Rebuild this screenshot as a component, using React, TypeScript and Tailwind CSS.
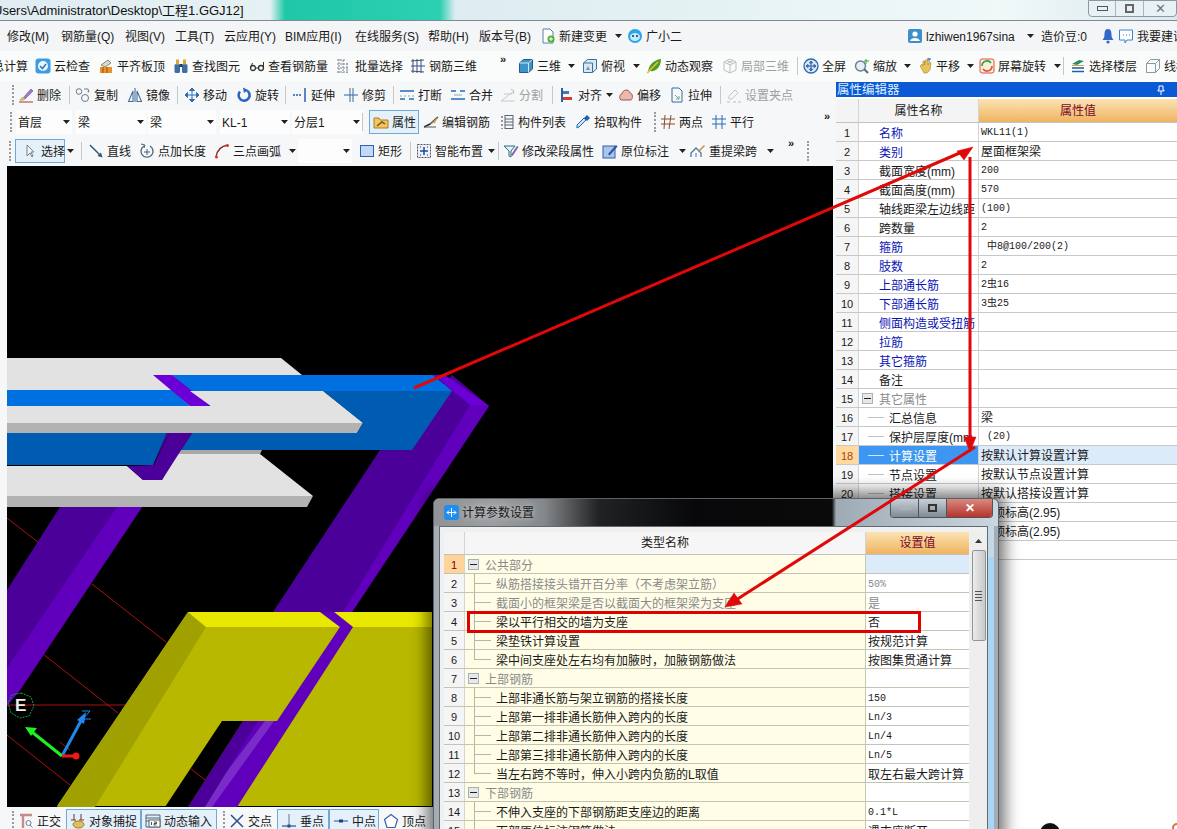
import React from "react";

const S = (p: { children: React.ReactNode }) => (
  <svg viewBox="0 0 16 16" className="w-4 h-4 flex-none" fill="none">{p.children}</svg>
);
const icons: Record<string, React.ReactNode> = {
  doc: <><path d="M3 1h7l3 3v11H3z" fill="#fff" stroke="#5a7fa8" /><circle cx="11" cy="11" r="3.5" fill="#4caf2e" /><path d="M9 11h4M11 9v4" stroke="#fff" /></>,
  bot: <><circle cx="8" cy="8" r="7" fill="#2aa5e8" /><ellipse cx="8" cy="9" rx="5" ry="4" fill="#bfeaff" /><circle cx="6" cy="8" r="1" fill="#135" /><circle cx="10" cy="8" r="1" fill="#135" /></>,
  user: <><rect x="1" y="1" width="14" height="14" rx="2" fill="#3d8fc9" /><circle cx="8" cy="6" r="2.6" fill="#fff" /><path d="M3 13c1-4 9-4 10 0z" fill="#fff" /></>,
  bell: <><path d="M8 1c3 0 3.5 3 3.5 6s1.5 4 2 5H2.500c.5-1 2-2 2-5S5 1 8 1z" fill="#3467c9" /><circle cx="8" cy="14" r="1.600" fill="#3467c9" /></>,
  chat: <><path d="M1.500 2h13v10H9l-2 3v-3H1.500z" fill="#fff" stroke="#3b82d6" /><path d="M5 7h1M8 7h1M11 7h1" stroke="#3b82d6" /></>,
  cloud: <><rect x="0.500" y="0.500" width="15" height="15" rx="3" fill="#3e9be0" /><circle cx="8" cy="8" r="5" fill="#e9f5ff" /><path d="M5 8l2.500 2.500L11 6" stroke="#2877c4" strokeWidth="1.500" /></>,
  level: <><path d="M3 7l7-5 3 3-6 4z" fill="#d9d9c8" stroke="#888" /><rect x="2" y="9" width="12" height="6" fill="#e8932a" /><path d="M5 9v6M9 9v6" stroke="#a34c10" /></>,
  bino: <><rect x="1.500" y="6" width="5.500" height="9" rx="1.500" fill="#3e6ea8" /><rect x="9" y="6" width="5.500" height="9" rx="1.500" fill="#3e6ea8" /><rect x="3" y="1.500" width="3" height="5" fill="#d9a63a" /><rect x="10" y="1.500" width="3" height="5" fill="#d9a63a" /><rect x="6.500" y="6" width="3" height="3" fill="#1f3f6a" /></>,
  glass: <><circle cx="4" cy="10" r="2.500" stroke="#333" strokeWidth="1.300" /><circle cx="12" cy="10" r="2.500" stroke="#333" strokeWidth="1.300" /><path d="M6.500 10h3M1.500 10l2-5M14.500 10V4" stroke="#333" /></>,
  batch: <path d="M1 2h9M1 6h12M1 10h12M1 14h12M3 1v14M7 2v13M11 5v10" stroke="#7b8794" strokeDasharray="2 1" />,
  rebar: <path d="M1 3l13-1M1 8h14M1 13l13 1M3 1v14M7 1v14M11 1v14" stroke="#3a4f7a" />,
  cube: <><path d="M1.500 5l4-3.500h9v9.500l-4 3.500h-9z" fill="#3f93c7" stroke="#235c85" /><path d="M1.500 5h9v9.500M10.500 5l4-3.500" stroke="#cfeaf8" /></>,
  top: <><path d="M1.500 5l4-3.500h9v9.500l-4 3.500h-9z" fill="#d9e8f2" stroke="#3c7198" /><path d="M1.500 5h9v9.500" stroke="#3c7198" /><path d="M4 12l2-4 2 4z" fill="#6a9ac0" /></>,
  orbit: <><path d="M2 15c0-7 5-13 13-14 0 8-5 13-11 12z" fill="#4f9e22" /><path d="M1 15L12 4" stroke="#f2c230" strokeWidth="1.500" /></>,
  local: <path d="M8 1l6 3v8l-6 3-6-3V4zM2 4l6 3 6-3M8 7v8M5 2.500l6 3M11 2.500l-6 3" stroke="#bdbdbd" />,
  full: <><circle cx="8" cy="8" r="7" fill="#d8e8f6" stroke="#2a6ab5" strokeWidth="1.300" /><path d="M8 3.500v9M3.500 8h9M8 3l-1.500 2h3zM8 13l-1.500-2h3zM3 8l2-1.500v3zM13 8l-2-1.500v3z" stroke="#2a5aa0" /></>,
  zoom: <><circle cx="6.500" cy="8" r="5" fill="#e7eef4" stroke="#6a7f90" strokeWidth="1.400" /><path d="M10 11l4 4" stroke="#5c6a75" strokeWidth="2" /><path d="M12 1v5M10 3h5" stroke="#3da028" /></>,
  hand: <><path d="M3 8l2-2 1 2V3h1.500v4l1-5H11v5l1.500-3.500L14 5l-1 7-3 3H7z" fill="#e7c25a" stroke="#a8842b" strokeWidth="0.600" /><path d="M10 1h4M12 0v3" stroke="#2a6ab5" /></>,
  rot: <><rect x="1" y="1" width="14" height="14" rx="2" fill="#f6f0d8" stroke="#e0503c" /><path d="M3 8a5 5 0 0 1 9-3" stroke="#29a044" strokeWidth="1.600" /><path d="M13 8a5 5 0 0 1-9 3" stroke="#e0503c" strokeWidth="1.600" /></>,
  floor: <><path d="M2 6l7-4 5 1-7 4z" fill="#2b8c60" /><path d="M2 10h12M2 13.500h12" stroke="#1d5fa8" strokeWidth="1.600" /><path d="M2 7.500h12" stroke="#d8a63a" /></>,
  wire: <path d="M1.500 5.500l4-4h9v9l-4 4h-9zM1.500 5.500h9v9M10.500 5.500l4-4" stroke="#8a9aa5" />,
  del: <><path d="M5 11L13 2l2 2-8 8z" fill="#9a7cc8" stroke="#6b4d9a" strokeWidth="0.600" /><path d="M2 13c1-2 3-3 4-2s0 3-4 2z" fill="#e6d07a" stroke="#a58a35" strokeWidth="0.600" /><path d="M1 15h14" stroke="#a33" /></>,
  copy: <><circle cx="4" cy="4.500" r="2.800" stroke="#6d7a85" /><circle cx="10" cy="11" r="3.500" stroke="#6d7a85" /><path d="M9 2h4l1 3M14 5l-1.500-.5" stroke="#6d7a85" /></>,
  mirror: <path d="M8 1v14M6 4L1.500 14.500H6zM10 4l4.500 10.500H10z" stroke="#46709b" strokeWidth="1.100" />,
  move: <path d="M8 1v14M1 8h14M8 1L5.500 3.500h5zM8 15l-2.500-2.500h5zM1 8l2.500-2.500v5zM15 8l-2.500-2.500v5z" fill="#2c6db3" stroke="#2c6db3" />,
  rotate: <><path d="M4 4.500A5.500 5.500 0 1 0 11 3.500" stroke="#2a66c0" strokeWidth="2.600" /><path d="M7 .5l5 2.500-4 3z" fill="#2a66c0" /></>,
  extend: <><path d="M1 8h9" stroke="#2a5fb0" strokeWidth="1.500" strokeDasharray="2 1" /><path d="M13 1v14" stroke="#2a5fb0" strokeWidth="1.500" /></>,
  trim: <><path d="M1 8h14" stroke="#2a5fb0" /><path d="M7 1v14M10 1v14" stroke="#3c6a90" /></>,
  brk: <><path d="M1 4h14M1 12h5M10 12h5" stroke="#2a6ab5" strokeWidth="1.500" /><path d="M1 9h14" stroke="#8ab" strokeDasharray="2 2" /></>,
  join: <><path d="M1 12h14M1 4h5M10 4h5" stroke="#2a6ab5" strokeWidth="1.500" /><path d="M4 8h8" stroke="#8ab" /></>,
  split: <><path d="M1 14h14M1 14L14 4M4 7h8" stroke="#c9c9c9" /><path d="M11 2l3 2-1 3" stroke="#bdbdbd" /></>,
  align: <><path d="M3 1v14" stroke="#2b5f9e" strokeWidth="2" /><path d="M4 4h6v3H4z" fill="#4a78b0" /><path d="M4 10h9v3H4z" fill="#d13e32" /></>,
  offset: <path d="M2 12c-1-4 1-5 2-5 0-4 7-6 8-1 3 0 3 6 1 7H3z" fill="#f0b8ac" stroke="#8a5f60" />,
  stretch: <><path d="M3 1h7l3 3v11H3z" stroke="#356a9e" /><path d="M6 8l4 4M10 9v3H7" stroke="#6a8" /></>,
  grip: <><path d="M9 3l3 3-6 6H3v-3z" stroke="#c6c6c6" /><path d="M1 15h3M7 15h3M12 15h3" stroke="#bdbdbd" /></>,
  attr: <><path d="M1 4h5l1 2h8v8H1z" fill="#f3c464" stroke="#ae7c1f" /><path d="M4 12l5-4 3 2" stroke="#7a5310" strokeWidth="1.500" /></>,
  editbar: <><path d="M1 13l6-3 8-7" stroke="#333" strokeWidth="1.500" /><path d="M7 10l8-7-3 6z" fill="#c9a24c" /><path d="M1 13h12" stroke="#555" /></>,
  list: <><path d="M3 2v2M3 6v2M3 10v2M3 14v1" stroke="#666" strokeWidth="1.300" /><rect x="6" y="1.500" width="8" height="13" stroke="#5b6770" /><path d="M6 5h8M6 8h8M6 11h8" stroke="#5b6770" /></>,
  pick: <><path d="M2 14l2-1 7-7-2-2-7 7z" fill="#cfe4f6" stroke="#1c63b0" /><path d="M9 4l3-3 3 3-3 3z" fill="#1c63b0" /></>,
  two: <path d="M1 5h14M1 10h14M5 1l-1 14M11 1L9 15" stroke="#8a4e2f" strokeWidth="1" />,
  para: <path d="M1 5h14M1 10h14M5 1v14M11 1v14" stroke="#2a6ab5" />,
  pointer: <path d="M5 2v11l3-3 2 4 1-1-2-4h3z" fill="#f5f5f5" stroke="#7a7f85" />,
  line: <><path d="M2 2l11 11" stroke="#36566f" strokeWidth="1.500" /><path d="M14.500 14.500l-5-1.500 3.500-3.500z" fill="#36566f" /></>,
  addlen: <><path d="M5 3a6 6 0 1 0 6 0" stroke="#48627a" strokeWidth="1.300" /><path d="M8 6v6M5 9h6" stroke="#48627a" /><path d="M2 1l4 1-1 3" stroke="#48627a" /></>,
  arc: <><path d="M2 14C3 7 7 3 14 2" stroke="#8a2a2a" strokeWidth="1.400" /><circle cx="2.500" cy="14" r="1.500" fill="#d33" /><circle cx="13.500" cy="2.500" r="1.500" fill="#d33" /></>,
  rect: <rect x="1.500" y="2.500" width="13" height="11" fill="#c4d7f4" stroke="#2d62b8" />,
  smart: <><rect x="1.500" y="1.500" width="13" height="13" stroke="#555" strokeDasharray="2 1" fill="#eef" /><path d="M8 4v8M4 8h8" stroke="#1a4e96" strokeWidth="1.500" /><path d="M4 4h1M11 4h1M4 12h1M11 12h1" stroke="#333" /></>,
  funnel: <><path d="M1 3h11L8 8v6l-2-1V8z" fill="#e4f0f5" stroke="#2a6e80" /><path d="M8 12l6-9 1.500 1-6 9z" fill="#7a5fa8" /></>,
  note: <><rect x="1" y="3" width="12" height="12" fill="#a9c5ea" stroke="#2f5fa5" /><path d="M6 11l8-9 1.500 1.500-8 9z" fill="#2a55a0" /></>,
  span: <><path d="M1 14V10l5-5 5 5v4" stroke="#4878b0" strokeWidth="1.300" /><path d="M6 14V10" stroke="#4878b0" /><path d="M8 8l6-6 1 1-6 6z" fill="#c9893a" /></>,
  ortho: <><path d="M2 2h12M5 2v13" stroke="#c98b85" strokeWidth="2.400" /><circle cx="10.500" cy="10" r="2.500" stroke="#6b8499" /><path d="M12 12l2.500 2.500" stroke="#6b8499" /></>,
  snap: <><path d="M4 1v6M11 1v6M1 7h5M9 7h5" stroke="#7a2c2c" /><ellipse cx="8.500" cy="11.500" rx="5.500" ry="3.500" fill="#e1bd62" stroke="#99792a" /></>,
  input: <><path d="M1 2h14M1 5h14M1 8h3M1 2v12h14V2" stroke="#53636f" /><rect x="4" y="7" width="11" height="7" fill="#fff" stroke="#53636f" /><path d="M6.500 9v3M9 9h2.500v1.500H9V12h2.500" stroke="#222" strokeWidth="0.800" /></>,
  cross: <path d="M2 2l12 12M14 2L2 14" stroke="#2a4f8e" strokeWidth="1.500" />,
  perp: <><path d="M1 13h14" stroke="#2a4f8e" strokeWidth="1.200" /><path d="M8 1v12" stroke="#66788a" /><rect x="6.500" y="11.500" width="3" height="3" fill="#2a4f8e" /></>,
  mid: <><path d="M1 8h14" stroke="#4a6a9a" strokeWidth="1.200" /><rect x="6" y="6.500" width="4" height="3" fill="#16408e" /></>,
  vertex: <path d="M8 1.500l6.500 5-2.500 8H4l-2.500-8z" stroke="#3465a8" strokeWidth="1.200" fill="#fff" />,
};

const Ico = ({ n }: { n: string }) => <S>{icons[n]}</S>;

type TP = { i?: string; t: string; w: string; g?: boolean };
const T = ({ i, t, w, g }: TP) => (
  <div className={`flex items-center flex-none h-full ${w} ${g ? "text-[#9f9f9f]" : ""}`}>
    {i && <Ico n={i} />}
    <span className={`whitespace-nowrap pt-[2px] ${i ? "ml-[3px]" : ""}`}>{t}</span>
  </div>
);
const Caret = ({ w }: { w: string }) => (
  <div className={`flex items-center flex-none h-full ${w}`}>
    <svg width="7" height="4" viewBox="0 0 7 4" className="ml-[2px]"><path d="M0 0h7L3.500 4z" fill="#222" /></svg>
  </div>
);
const Sep = ({ w }: { w: string }) => (
  <div className={`flex items-center flex-none h-full ${w}`}><div className="w-px h-[18px] bg-[#c4c8cc]" /></div>
);
const Grip = ({ w }: { w: string }) => (
  <div className={`flex items-center justify-end flex-none h-full ${w}`}>
    <div className="w-[2px] h-[20px] mr-[4px] border-l-2 border-dotted border-[#9a9a9a]" />
  </div>
);
const More = ({ w }: { w: string }) => (
  <div className={`flex-none h-full pt-[1px] text-[11px] font-bold leading-[14px] ${w}`}>»</div>
);
const Btn = ({ i, t, w, p }: { i: string; t: string; w: string; p: string }) => (
  <div className={`flex items-center flex-none h-[24px] border border-[#6fa9d6] bg-[#e4f1fb] ${w} ${p}`}>
    <Ico n={i} />
    <span className="ml-[3px] pt-[2px] whitespace-nowrap">{t}</span>
  </div>
);
const Sel = ({ t, w, m }: { t: string; w: string; m: string }) => (
  <div className={`flex items-center justify-between flex-none h-[24px] bg-[#fdfdfd] pl-[2px] pr-[2px] ${w} ${m}`}>
    <span className="pt-[2px]">{t}</span>
    <svg width="7" height="4" viewBox="0 0 7 4"><path d="M0 0h7L3.500 4z" fill="#222" /></svg>
  </div>
);

const propRows: { n: string; v?: string; mono?: boolean; blue?: boolean; child?: boolean; group?: boolean; sel?: boolean }[] = [
  { n: "名称", v: "WKL11(1)", mono: true, blue: true },
  { n: "类别", v: "屋面框架梁", blue: true },
  { n: "截面宽度(mm)", v: "200", mono: true },
  { n: "截面高度(mm)", v: "570", mono: true },
  { n: "轴线距梁左边线距", v: "(100)", mono: true },
  { n: "跨数量", v: "2", mono: true },
  { n: "箍筋", v: " 中8@100/200(2)", mono: true, blue: true },
  { n: "肢数", v: "2", mono: true, blue: true },
  { n: "上部通长筋", v: "2虫16", mono: true, blue: true },
  { n: "下部通长筋", v: "3虫25", mono: true, blue: true },
  { n: "侧面构造或受扭筋", blue: true },
  { n: "拉筋", blue: true },
  { n: "其它箍筋", blue: true },
  { n: "备注" },
  { n: "其它属性", group: true },
  { n: "汇总信息", v: "梁", child: true },
  { n: "保护层厚度(mm", v: " (20)", child: true, mono: true },
  { n: "计算设置", v: "按默认计算设置计算", child: true, sel: true },
  { n: "节点设置", v: "按默认节点设置计算", child: true },
  { n: "搭接设置", v: "按默认搭接设置计算", child: true },
  { n: "起点顶标高(m)", v: "层顶标高(2.95)", child: true },
  { n: "终点顶标高(m)", v: "层顶标高(2.95)", child: true },
  { n: "" },
];

const calcRows: { n: string; v?: string; group?: boolean; gray?: boolean; last?: boolean; mono?: boolean }[] = [
  { n: "公共部分", group: true },
  { n: "纵筋搭接接头错开百分率（不考虑架立筋）", v: "50%", gray: true, mono: true },
  { n: "截面小的框架梁是否以截面大的框架梁为支座", v: "是", gray: true },
  { n: "梁以平行相交的墙为支座", v: "否" },
  { n: "梁垫铁计算设置", v: "按规范计算" },
  { n: "梁中间支座处左右均有加腋时，加腋钢筋做法", v: "按图集贯通计算", last: true },
  { n: "上部钢筋", group: true },
  { n: "上部非通长筋与架立钢筋的搭接长度", v: "150", mono: true },
  { n: "上部第一排非通长筋伸入跨内的长度", v: "Ln/3", mono: true },
  { n: "上部第二排非通长筋伸入跨内的长度", v: "Ln/4", mono: true },
  { n: "上部第三排非通长筋伸入跨内的长度", v: "Ln/5", mono: true },
  { n: "当左右跨不等时，伸入小跨内负筋的L取值", v: "取左右最大跨计算", last: true },
  { n: "下部钢筋", group: true },
  { n: "不伸入支座的下部钢筋距支座边的距离", v: "0.1*L", mono: true },
  { n: "下部原位标注钢筋做法", v: "遇支座断开" },
];

const Minus = () => (
  <div className="w-[11px] h-[11px] flex-none border border-[#a8b0b8] bg-[#e6e8ea] flex items-center justify-center">
    <div className="w-[7px] h-px bg-[#222]" />
  </div>
);
const monoCls = "font-['Liberation_Mono','Noto_Sans_CJK_SC',monospace] text-[10px]";

const Scene = () => (
  <svg viewBox="7 166 826 641" className="block w-[826px] h-[641px]">
    <rect x="7" y="166" width="826" height="641" fill="#000" />
    <g stroke="#d01818" strokeWidth="0.800">
      <path d="M7 518L39 543M92 584L166 642M43 654L118 713M7 705H125M7 735L70 785M60 742L70 750" />
    </g>
    {/* purple columns */}
    <path d="M60 507H142L20 690 7 706V590z" fill="#4c009a" />
    <path d="M117 507H142L20 690 7 706V668z" fill="#6000bd" />
    <path d="M380 450L452 375 489 406 352 612H273z" fill="#4c009a" />
    <path d="M470 405L489 406 352 612H343z" fill="#6000bd" />
    <path d="M433 375H445L489 406 470 405 452 390z" fill="#6a00d6" />
    {/* grey plates */}
    <path d="M7 358H281L302 375H172L190 391H323L363 423H7z" fill="#e2e2e2" />
    <path d="M7 375H153L190 406H7z" fill="#e2e2e2" />
    <path d="M7 423H363L357 433H7z" fill="#b2b2b2" />
    {/* blue */}
    <path d="M172 375H433L452 391H323H190z" fill="#0070e0" />
    <path d="M7 390H172L190 406H7z" fill="#0070e0" />
    <path d="M153 375H172L211 406H190z" fill="#6a00d6" />
    <path d="M190 391H323L363 423H7V406H211z" fill="#e2e2e2" />
    <path d="M323 391H452L412 450H181L192 433H357L363 423z" fill="#005cb2" />
    <path d="M7 433H167L153 465H7z" fill="#005cb2" />
    <path d="M180 450H262L260 454H176z" fill="#a8a8a8" />
    <path d="M7 466H127L143 480H162L176 454H260L313 496H7z" fill="#e2e2e2" />
    <path d="M7 496H313L307 507H7z" fill="#b2b2b2" />
    <path d="M170 433H192L162 480H143L127 466H153z" fill="#4c009a" />
    <path d="M127 466H153L167 433H170L153 465z" fill="#4c009a" />
    {/* yellow */}
    <path d="M188 612H432V806H57z" fill="#b8b800" />
    <path d="M188 612L206 627 95 807H57z" fill="#a0a000" />
    <path d="M188 612H320L340 627H206z" fill="#e8e800" />
    <path d="M334 612H432V627H353z" fill="#e8e800" />
    <path d="M320 612H334L353 627 237 807H188L243 721H277L340 627z" fill="#6000bd" />
    <path d="M265 721H274L212 807H200z" fill="#7a2cc8" />
    <path d="M243 721H258L205 807H188z" fill="#4c009a" />
    <path d="M222 721H243L188 807H165z" fill="#000" />
    <path d="M190 768L205 780" stroke="#d01818" strokeWidth="0.800" />
    {/* axis */}
    <path d="M21 693l10 4 3 9-5 10-9 2-9-5-3-10 4-8z" fill="none" stroke="#14a03c" strokeDasharray="2 1" />
    <text x="15" y="711" fill="#f0f0f0" fontSize="17" fontWeight="700" fontFamily="Liberation Sans, sans-serif">E</text>
    <path d="M62 756L82 719" stroke="#1e88f0" strokeWidth="3" />
    <path d="M86 712l-9 8 7 4z" fill="#1e88f0" />
    <path d="M82 711h8l-7 8h8" stroke="#1e88f0" fill="none" />
    <path d="M62 756L32 732" stroke="#20f020" strokeWidth="3" />
    <path d="M25 727l12 1-6 8z" fill="#20f020" />
    <path d="M62 756H74" stroke="#f01818" strokeWidth="3" />
    <circle cx="76" cy="756" r="3.500" fill="#f01818" />
  </svg>
);

export default function App() {
  return (
    <div className="relative w-[1177px] h-[829px] overflow-hidden bg-[#f6f7f8] text-[12px] leading-none text-[#1a1a1a] font-['Liberation_Sans','Noto_Sans_CJK_SC',sans-serif]">
      {/* title bar */}
      <div className="flex items-center h-[21px] border-b border-[#7f8a92] bg-[linear-gradient(90deg,#dfecf1_0,#e6f1f4_270px,#1fc8a6_285px,#2ccfb2_440px,#dcecf0_455px,#e9f5f6_820px,#f0f8f8_1000px,#dbe9ef_100%)]">
        <span className="-ml-[7px] text-[13px] text-[#111] flex-none">Users\Administrator\Desktop\工程1.GGJ12]</span>
        <div className="flex-1" />
        <div className="flex items-center flex-none w-[89px] h-[17px] -mt-[4px] border border-[#8b99a3] rounded-b-[4px] bg-[#e8f1f4] text-[#555]">
          <div className="w-[27px] h-full flex items-center justify-center border-r border-[#aab4bb]"><div className="w-[11px] h-[5px] border border-[#555]" /></div>
          <div className="w-[28px] h-full flex items-center justify-center border-r border-[#aab4bb]"><div className="w-[9px] h-[9px] border-2 border-[#666]" /></div>
          <div className="flex-1 text-center text-[13px] text-[#6a7680]">✕</div>
        </div>
      </div>
      {/* menu */}
      <div className="flex items-center h-[30px] pl-[7px] bg-[#f4f5f6]">
        <T t="修改(M)" w="w-[54px]" />
        <T t="钢筋量(Q)" w="w-[64px]" />
        <T t="视图(V)" w="w-[50px]" />
        <T t="工具(T)" w="w-[49px]" />
        <T t="云应用(Y)" w="w-[61px]" />
        <T t="BIM应用(I)" w="w-[70px]" />
        <T t="在线服务(S)" w="w-[73px]" />
        <T t="帮助(H)" w="w-[51px]" />
        <T t="版本号(B)" w="w-[61px]" />
        <T i="doc" t="新建变更" w="w-[73px]" />
        <Caret w="w-[14px]" />
        <T i="bot" t="广小二" w="w-[280px]" />
        <T i="user" t="lzhiwen1967sina" w="w-[118px]" />
        <Caret w="w-[16px]" />
        <T t="造价豆:0" w="w-[59px]" />
        <div className="flex-none w-[18px]"><Ico n="bell" /></div>
        <T i="chat" t="我要建议" w="w-[60px]" />
      </div>
      {/* toolbar 2 */}
      <div className="flex items-center h-[30px] bg-[#fafbfb] overflow-hidden">
        <div className="flex-none w-[35px] h-full flex items-center"><span className="-ml-[8px] pt-[2px] whitespace-nowrap">总计算</span></div>
        <T i="cloud" t="云检查" w="w-[63px]" />
        <T i="level" t="平齐板顶" w="w-[75px]" />
        <T i="bino" t="查找图元" w="w-[76px]" />
        <T i="glass" t="查看钢筋量" w="w-[87px]" />
        <T i="batch" t="批量选择" w="w-[74px]" />
        <T i="rebar" t="钢筋三维" w="w-[90px]" />
        <More w="w-[18px]" />
        <T i="cube" t="三维" w="w-[48px]" />
        <Caret w="w-[16px]" />
        <T i="top" t="俯视" w="w-[49px]" />
        <Caret w="w-[15px]" />
        <T i="orbit" t="动态观察" w="w-[76px]" />
        <T i="local" t="局部三维" w="w-[75px]" g />
        <Sep w="w-[6px]" />
        <T i="full" t="全屏" w="w-[51px]" />
        <T i="zoom" t="缩放" w="w-[48px]" />
        <Caret w="w-[15px]" />
        <T i="hand" t="平移" w="w-[48px]" />
        <Caret w="w-[14px]" />
        <T i="rot" t="屏幕旋转" w="w-[73px]" />
        <Caret w="w-[11px]" />
        <Sep w="w-[7px]" />
        <T i="floor" t="选择楼层" w="w-[75px]" />
        <T i="wire" t="线框" w="w-[60px]" />
      </div>
      {/* main */}
      <div className="flex h-[748px]">
        <div className="flex flex-col flex-none w-[836px]">
          <div className="flex items-center flex-none h-[27px]">
            <Grip w="w-[18px]" />
            <T i="del" t="删除" w="w-[51px]" />
            <Sep w="w-[6px]" />
            <T i="copy" t="复制" w="w-[52px]" />
            <T i="mirror" t="镜像" w="w-[50px]" />
            <Sep w="w-[7px]" />
            <T i="move" t="移动" w="w-[52px]" />
            <T i="rotate" t="旋转" w="w-[49px]" />
            <Sep w="w-[7px]" />
            <T i="extend" t="延伸" w="w-[51px]" />
            <T i="trim" t="修剪" w="w-[50px]" />
            <Sep w="w-[6px]" />
            <T i="brk" t="打断" w="w-[51px]" />
            <T i="join" t="合并" w="w-[50px]" />
            <T i="split" t="分割" w="w-[52px]" g />
            <Sep w="w-[7px]" />
            <T i="align" t="对齐" w="w-[45px]" />
            <Caret w="w-[14px]" />
            <T i="offset" t="偏移" w="w-[51px]" />
            <T i="stretch" t="拉伸" w="w-[51px]" />
            <Sep w="w-[6px]" />
            <T i="grip" t="设置夹点" w="w-[70px]" g />
          </div>
          <div className="flex items-center flex-none h-[27px]">
            <Grip w="w-[16px]" />
            <Sel t="首层" w="w-[56px]" m="ml-0" />
            <Sel t="梁" w="w-[70px]" m="ml-[4px]" />
            <Sel t="梁" w="w-[68px]" m="ml-[2px]" />
            <Sel t="KL-1" w="w-[70px]" m="ml-[4px]" />
            <Sel t="分层1" w="w-[70px]" m="ml-[2px]" />
            <Sep w="w-[7px]" />
            <Btn i="attr" t="属性" w="w-[50px]" p="pl-[3px]" />
            <div className="w-[4px] flex-none" />
            <T i="editbar" t="编辑钢筋" w="w-[76px]" />
            <T i="list" t="构件列表" w="w-[76px]" />
            <T i="pick" t="拾取构件" w="w-[76px]" />
            <Grip w="w-[9px]" />
            <T i="two" t="两点" w="w-[51px]" />
            <T i="para" t="平行" w="w-[60px]" />
            <div className="flex-1" />
            <More w="w-[12px]" />
          </div>
          <div className="flex items-center flex-none h-[31px]">
            <Grip w="w-[15px]" />
            <Btn i="pointer" t="选择" w="w-[50px]" p="pl-[6px]" />
            <Caret w="w-[16px]" />
            <Sep w="w-[7px]" />
            <T i="line" t="直线" w="w-[51px]" />
            <T i="addlen" t="点加长度" w="w-[75px]" />
            <T i="arc" t="三点画弧" w="w-[73px]" />
            <Caret w="w-[11px]" />
            <Sel t="" w="w-[54px]" m="ml-0" />
            <div className="w-[7px] flex-none" />
            <T i="rect" t="矩形" w="w-[51px]" />
            <Sep w="w-[6px]" />
            <T i="smart" t="智能布置" w="w-[70px]" />
            <Caret w="w-[12px]" />
            <Sep w="w-[5px]" />
            <T i="funnel" t="修改梁段属性" w="w-[99px]" />
            <T i="note" t="原位标注" w="w-[75px]" />
            <Caret w="w-[13px]" />
            <T i="span" t="重提梁跨" w="w-[75px]" />
            <Caret w="w-[23px]" />
            <More w="w-[17px]" />
            <Grip w="w-[8px]" />
          </div>
          <div className="flex flex-none h-[641px] pl-[7px]"><Scene /></div>
          <div className="flex items-center flex-none h-[24px] mt-[2px]">
            <Grip w="w-[18px]" />
            <T i="ortho" t="正交" w="w-[48px]" />
            <Btn i="snap" t="对象捕捉" w="w-[75px]" p="pl-[3px]" />
            <Btn i="input" t="动态输入" w="w-[76px]" p="pl-[3px]" />
            <Grip w="w-[12px]" />
            <T i="cross" t="交点" w="w-[48px]" />
            <Btn i="perp" t="垂点" w="w-[52px]" p="pl-[3px]" />
            <Btn i="mid" t="中点" w="w-[50px]" p="pl-[3px]" />
            <div className="pl-[4px] h-full flex-none"><T i="vertex" t="顶点" w="w-[50px]" /></div>
          </div>
        </div>
        {/* property panel */}
        <div className="flex-1 pt-[1px] bg-white">
          <div className="flex items-center justify-between h-[15px] pl-[1px] pr-[12px] bg-[#0a5ad6] text-[#dfeeff] text-[12.500px]">
            <span className="pt-[2px]">属性编辑器</span>
            <svg width="8" height="10" viewBox="0 0 8 10" fill="none"><path d="M2 1h4v4h1v1H1V5h1zM4 6v4" stroke="#fff" /></svg>
          </div>
          <div className="flex h-[26px] pt-[2px] border-b border-[#c2c2c2] text-[12px]">
            <div className="w-[23px] flex-none bg-[#f4f4f4] border-r border-[#d4d4d4]" />
            <div className="w-[120px] flex-none bg-[#f4f4f4] border-r border-[#d4d4d4] flex items-center justify-center">属性名称</div>
            <div className="flex-1 bg-[linear-gradient(180deg,#fbe3b4,#efb460)] flex items-center justify-center text-[#7a0a2a]">属性值</div>
          </div>
          {propRows.map((r, k) => (
            <div key={k} className="flex h-[19px] border-b border-[#c8c8c8]">
              <div className={`w-[23px] flex-none flex items-center justify-center border-r border-[#d4d4d4] text-[11px] ${r.sel ? "bg-[#ffd9a0] text-[#a04a10]" : "bg-[#f5f5f5]"}`}>
                <span className="pt-[2px]">{k + 1}</span>
              </div>
              <div className={`w-[120px] flex-none flex items-center border-r border-[#d4d4d4] overflow-hidden whitespace-nowrap ${r.sel ? "bg-[#3d97f2] text-white" : ""} ${r.blue ? "text-[#0a14b4]" : ""}`}>
                {r.group ? (
                  <><div className="ml-[3px]"><Minus /></div><span className="ml-[6px] pt-[3px] text-[#8a8a8a]">{r.n}</span></>
                ) : r.child ? (
                  <><div className={`ml-[9px] w-[16px] h-px flex-none ${r.sel ? "bg-[#cfe6ff]" : "bg-[#b8c4cc]"}`} /><span className="ml-[5px] pt-[3px]">{r.n}</span></>
                ) : (
                  <span className="ml-[20px] pt-[3px]">{r.n}</span>
                )}
              </div>
              <div className={`flex-1 flex items-center pl-[2px] whitespace-pre ${r.sel ? "bg-[#dcebfa]" : ""} ${r.mono ? monoCls : ""}`}>
                <span className="pt-[2px]">{r.v}</span>
              </div>
            </div>
          ))}
        </div>
      </div>

      {/* dialog */}
      <div className="absolute left-[433px] top-[498px] w-[566px] h-[340px] rounded-t-[6px] border border-[#5c6268] bg-[#a3adb3] shadow-[0_0_16px_6px_rgba(0,0,0,0.55)]">
        <div className="relative flex items-center h-[27px] pl-[10px] rounded-t-[6px] bg-[linear-gradient(90deg,#8f9396_0,#9b9ea0_60px,#85888a_110px,#202224_165px,#08080a_260px,#0a0a0a_398px,#9eaab4_402px,#cbd6de_100%)]">
          <div className="w-[15px] h-[15px] rounded-[3px] bg-[#1e8ff0] flex items-center justify-center flex-none">
            <svg width="11" height="11" viewBox="0 0 11 11" fill="none"><path d="M5.500 1v9M1 5.500h9M3 3.500L1 5.500l2 2M8 3.500l2 2-2 2" stroke="#fff" /></svg>
          </div>
          <span className="ml-[3px] text-[#1a1a1a] [text-shadow:0_0_6px_#dfe3e6]">计算参数设置</span>
          <div className="absolute right-[5px] top-0 flex h-[19px] w-[103px] border border-t-0 border-[#4a5560] rounded-b-[4px] overflow-hidden">
            <div className="w-[28px] flex items-center justify-center bg-[linear-gradient(180deg,#c8d0d6,#7f8b94)] border-r border-[#4a5560]"><div className="w-[12px] h-[3px] bg-[#aab2b8]" /></div>
            <div className="w-[28px] flex items-center justify-center bg-[linear-gradient(180deg,#c8d0d6,#7f8b94)] border-r border-[#4a5560]"><div className="w-[9px] h-[8px] border-2 border-[#333]" /></div>
            <div className="flex-1 flex items-center justify-center bg-[linear-gradient(180deg,#d88a80,#b8332a)] text-white font-bold text-[12px]">✕</div>
          </div>
        </div>
        <div className="flex h-[320px] ml-[5px] mr-[4px]">
          <div className="flex-none w-[549px] h-full border border-[#5f6a72] bg-[#f0f0f0] px-[4px] pt-[5px]">
            <div className="flex">
              <div className="flex-none w-[525px]">
                <div className="flex h-[23px] border-b border-[#c2c2c2]">
                  <div className="w-[21px] flex-none bg-[#f4f4f4] border-r border-[#d4d4d4]" />
                  <div className="w-[401px] flex-none bg-[#f6f6f6] border-r border-[#d4d4d4] flex items-center justify-center">类型名称</div>
                  <div className="flex-1 bg-[linear-gradient(180deg,#fbe3b4,#efb460)] flex items-center justify-center text-[#7a0a2a]">设置值</div>
                </div>
                {calcRows.map((r, k) => (
                  <div key={k} className="flex h-[19px] border-b border-[#c4c4b4] bg-white">
                    <div className={`w-[21px] flex-none flex items-center justify-center border-r border-[#d4d4d4] text-[11px] ${k === 0 ? "bg-[#ffd49b] text-[#800000]" : "bg-[#f5f5f5]"}`}>
                      <span className="pt-[2px]">{k + 1}</span>
                    </div>
                    <div className="w-[401px] flex-none flex items-center border-r border-[#c8c8b0] bg-[#fffde6] whitespace-nowrap overflow-hidden">
                      {r.group ? (
                        <><div className="ml-[3px]"><Minus /></div><span className="ml-[6px] pt-[3px] text-[#8a8a8a]">{r.n}</span></>
                      ) : (
                        <>
                          <div className={`ml-[9px] w-[17px] flex-none border-l border-[#b0b8a8] ${r.last ? "h-[10px] self-start border-b" : "h-full flex items-center"}`}>
                            {!r.last && <div className="w-full h-px bg-[#b0b8a8]" />}
                          </div>
                          <span className={`ml-[5px] pt-[3px] ${r.gray ? "text-[#8a8a8a]" : ""}`}>{r.n}</span>
                        </>
                      )}
                    </div>
                    <div className={`flex-1 flex items-center pl-[2px] ${k === 0 ? "bg-[#dcebfa]" : ""} ${r.gray ? "text-[#8a8a8a]" : ""} ${r.mono ? monoCls : ""}`}>
                      <span className="pt-[3px]">{r.v}</span>
                    </div>
                  </div>
                ))}
              </div>
              <div className="flex-none w-[17px] h-[310px] ml-[1px] bg-[#eeeeee] flex flex-col items-center">
                <svg width="7" height="4" viewBox="0 0 7 4" className="mt-[7px]"><path d="M3.500 0L7 4H0z" fill="#333" /></svg>
                <div className="mt-[7px] w-[14px] h-[91px] rounded-[2px] border border-[#8f9499] bg-[linear-gradient(90deg,#ececec,#c8c8c8)] flex flex-col items-center justify-center gap-[2px]">
                  <div className="w-[7px] h-px bg-[#555]" /><div className="w-[7px] h-px bg-[#555]" /><div className="w-[7px] h-px bg-[#555]" /><div className="w-[7px] h-px bg-[#555]" />
                </div>
              </div>
            </div>
          </div>
          <div className="flex-1 bg-[linear-gradient(180deg,#c5d8e6,#c5d8e6_30px,#a9d6f6_32px)]" />
        </div>
      </div>

      {/* annotations */}
      <svg viewBox="0 0 1177 829" className="absolute inset-0 w-[1177px] h-[829px] pointer-events-none">
        <g fill="#e00808" stroke="#e00808">
          <path d="M414 388L962 152" strokeWidth="3" fill="none" />
          <path d="M973 147L957 151 964 160z" strokeWidth="0.500" />
          <path d="M970 157V440" strokeWidth="3" fill="none" />
          <path d="M970 452L964 437h12z" strokeWidth="0.500" />
          <path d="M975 447L736 600" strokeWidth="3" fill="none" />
          <path d="M725 607L742 604 734 593z" strokeWidth="0.500" />
        </g>
      </svg>
      <div className="absolute left-[467px] top-[611px] w-[454px] h-[22px] border-[3px] border-[#e00000]" />
      <div className="absolute left-[1040px] top-[823px] w-[20px] h-[20px] rounded-full bg-[#111]" />
      <div className="absolute left-[1172px] top-[823px] w-[10px] h-[10px] rounded-full border-2 border-[#d8703a] bg-white" />
    </div>
  );
}
